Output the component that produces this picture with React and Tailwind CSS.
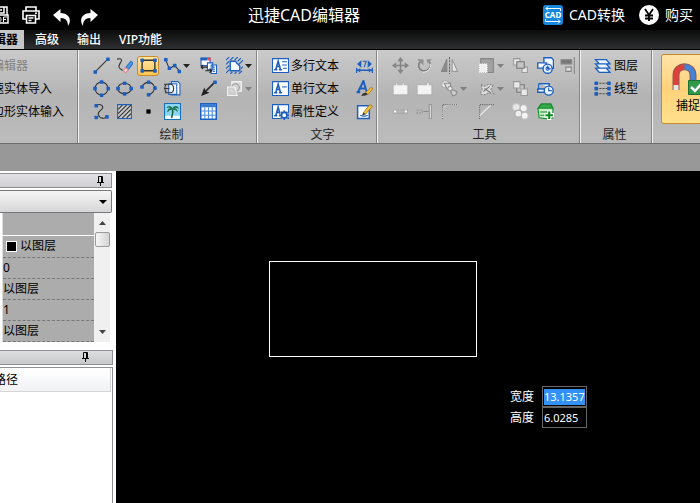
const BLUE = "#1d5fbf";
const GRAY = "#858585";

const Icon = ({ children }) => (
  <svg
    width="17"
    height="17"
    viewBox="0 0 16 16"
    fill="none"
    stroke="#333"
    strokeWidth="1"
    className="shrink-0"
    aria-hidden="true"
  >
    {children}
  </svg>
);

// small square handles used on most of the drawing icons
const Nodes = ({ at }) =>
  at.map(([x, y]) => (
    <rect key={`${x}-${y}`} x={x - 1.6} y={y - 1.6} width="3.4" height="3.4" rx=".6" fill={BLUE} />
  ));

const NodeGroup = ({ at }) => (
  <g stroke="none">
    <Nodes at={at} />
  </g>
);

const Caret = ({ light }) => (
  <svg width="7" height="4" viewBox="0 0 7 4" className="shrink-0" aria-hidden="true">
    <path d="M0 0h7L3.5 4z" fill={light ? "#808080" : "#222"} />
  </svg>
);

const PinIcon = () => (
  <svg width="9" height="10" viewBox="0 0 9 10" fill="none" stroke="#000" aria-hidden="true">
    <path d="M2.5 6V.5h4V6M5.5 1v5M1 6.5h7M4.5 7v3" />
  </svg>
);

const drawTools = [
  {
    name: "直线",
    icon: (
      <>
        <path d="M3 13L13 3" />
        <NodeGroup at={[[2, 14], [14, 2]]} />
      </>
    ),
  },
  {
    name: "草图",
    icon: (
      <>
        <path d="M1 2c3-1 5 0 4 2s-3 4-2 6 3 1 3 3" />
        <path d="M9.500 9.500L14 4l2 2-4.500 6z" fill="#4c9be8" stroke="#2a70c0" />
        <path d="M7 13l2-3 2.500 2L9 15z" fill="#f7e0e0" stroke="#d88" />
      </>
    ),
  },
  {
    name: "矩形",
    active: true,
    icon: (
      <>
        <path d="M2 3h12v10H2z" strokeWidth="1.3" />
        <NodeGroup at={[[2, 3], [14, 3], [2, 13], [14, 13]]} />
      </>
    ),
  },
  {
    name: "多段线",
    menu: true,
    icon: (
      <>
        <path d="M1.500 2.500L5 11l5-3 4.500 5" />
        <NodeGroup at={[[1.6, 2.5], [5, 10.5], [10, 8], [14.4, 13.5]]} />
      </>
    ),
  },
  {
    name: "插入块",
    icon: (
      <>
        <path d="M1 1h8.500v7H1z" fill="#fff" stroke={BLUE} />
        <path d="M.5 2h6.500" stroke={BLUE} strokeWidth="2.5" />
        <path d="M7 2h3" stroke="#e44" strokeWidth="2.5" />
        <path d="M7 5.500h5V12H7zM10.500 7.500h5v8h-5z" fill="#fff" stroke={BLUE} />
        <path d="M1 9.500h6M3 7.500l-2 2 2 2M5 13h6M9 11l2 2-2 2" stroke="#222" />
        <path d="M12 9.500h2M12 11.500h2M12 13.500h2" stroke={BLUE} />
      </>
    ),
  },
  {
    name: "边界",
    menu: true,
    icon: (
      <>
        <path d="M4 4h5c1 3 4 3 4 5v4H4z" fill="#f4f8ff" stroke={BLUE} strokeWidth="1.3" />
        <path
          d="M0 3l3-3M4 3l3-3M8 3l3-3M11 4l3-3M12 7l4-4M0 7l3-3M0 11l3-3M0 15l3-3M4 16l2-2M8 16l2-2M12 16l3-3M14 11l2-2"
          stroke={BLUE}
        />
      </>
    ),
  },
  {
    name: "圆",
    icon: (
      <>
        <circle cx="8" cy="8" r="6" />
        <NodeGroup at={[[8, 1.8], [8, 14.2], [1.8, 8], [14.2, 8]]} />
      </>
    ),
  },
  {
    name: "椭圆",
    icon: (
      <>
        <ellipse cx="8" cy="8" rx="6.3" ry="5" />
        <NodeGroup at={[[8, 3], [8, 13], [1.8, 8], [14.2, 8]]} />
      </>
    ),
  },
  {
    name: "圆弧",
    icon: (
      <>
        <path d="M2 6C5 1 11 1 13.500 6c1 4-2 7-6 8" />
        <NodeGroup at={[[1.8, 6.5], [8, 2], [14, 7.5], [8, 13.8]]} />
      </>
    ),
  },
  {
    name: "修订云线",
    icon: (
      <>
        <path d="M7 1.500h6l2 2V14H7z" fill="#fff" stroke={BLUE} />
        <path d="M4.500 3.500H12v10H4.500z" fill="#eef4fd" stroke={BLUE} />
        <path d="M0 4h6c4 0 4 8 0 8H1M2 4C0 7 1 10 2 12M0 8h5" />
      </>
    ),
  },
  {
    name: "引线",
    icon: (
      <>
        <path d="M14 2L5 11" strokeWidth="1.8" />
        <path d="M1 15l3-8 1.500 3.500L9 12z" fill="#222" stroke="none" />
        <NodeGroup at={[[14, 2]]} />
      </>
    ),
  },
  {
    name: "区域覆盖",
    menu: true,
    disabled: true,
    icon: (
      <>
        <path d="M5.500 1.500h9v9h-9z" fill="#d8d8d8" stroke="#f2f2f2" />
        <circle cx="9" cy="7" r="3.500" fill="#d2d2d2" stroke="#999" />
        <path d="M1.500 6.500h7l2 8h-9z" fill="#ddd" fillOpacity=".6" stroke="#f2f2f2" />
      </>
    ),
  },
  {
    name: "样条曲线",
    icon: (
      <>
        <path d="M3 3c2-3 7-1 6 2-1 2-5 3-4 6 1 4 6 4 8 2" />
        <NodeGroup at={[[3, 2.500], [3, 13.500], [13, 13]]} />
      </>
    ),
  },
  {
    name: "填充",
    icon: (
      <>
        <path d="M1.500 1.500h13v13h-13z" fill="#c9c9c9" stroke={BLUE} />
        <path d="M2 6l4-4M2 10l8-8M2 14L14 2M6 14l8-8M10 14l4-4" />
      </>
    ),
  },
  { name: "点", icon: <path d="M6 6h4v4H6z" fill="#000" stroke="none" /> },
  {
    name: "图像",
    icon: (
      <>
        <path d="M.5.5h15v15H.5z" fill="#8bd6f5" stroke="#1670bb" />
        <path d="M1 12h14v3H1z" fill="#f2faff" stroke="none" />
        <path d="M8 6c1 3 0 5-1 8" stroke="#165c36" strokeWidth="1.500" />
        <path
          d="M8 5C6 2 4 2 2 5c2-1 3-1 4 0-2 0-3 2-3 4 2-2 3-3 5-3 2 0 4 1 5 3 0-2-1-4-3-4 1-1 3 0 4 1 0-3-4-5-6-1z"
          fill="#147248"
          stroke="none"
        />
      </>
    ),
  },
  {
    name: "表格",
    icon: (
      <>
        <path d="M.7.7h14.600v14.600H.7z" fill="#fff" stroke={BLUE} strokeWidth="1.400" />
        <path d="M1 1h14v3H1z" fill="#397bd3" stroke="none" />
        <path d="M1 7.500h14M1 11.500h14M4.500 4v11M8 4v11M11.500 4v11" stroke="#4a8ae0" />
      </>
    ),
  },
];

// null leaves a cell of the grid empty
const editTools = [
  {
    name: "移动",
    icon: (
      <>
        <path d="M8 3v10M3 8h10" stroke={GRAY} strokeWidth="1.500" />
        <path d="M8 0l3 4H5zM8 16l3-4H5zM0 8l4-3v6zM16 8l-4-3v6z" fill={GRAY} stroke="none" />
      </>
    ),
  },
  {
    name: "旋转",
    icon: (
      <>
        <path d="M5 4C1 6 2 13 8 13c5 0 7-6 4-9" stroke="#7d7d7d" strokeWidth="1.500" />
        <path d="M6.500 14.500c5 0 8-4 7-8" stroke="#e4e4e4" />
        <path d="M1 2h6v6zM10 2h5l-4 4z" fill="#909090" stroke="none" />
      </>
    ),
  },
  {
    name: "镜像",
    icon: (
      <>
        <path d="M5.500 2v11.500h-5z" fill="#8d8d8d" stroke={GRAY} />
        <path d="M10.500 2v11.500h5z" fill="#e6e6e6" stroke="#999" />
        <path d="M8 0v16" stroke="#666" strokeDasharray="2 1" />
      </>
    ),
  },
  {
    name: "缩放",
    menu: true,
    icon: (
      <>
        <path d="M2.500 1.500h12v13h-12z" fill="#a2a2a2" stroke={GRAY} />
        <path d="M1.500 6.500h7v8h-7z" fill="#f0f0f0" stroke="#fff" strokeDasharray="1 1" />
      </>
    ),
  },
  {
    name: "前置",
    icon: (
      <>
        <path d="M1.500 1.500h6v6h-6zM9.500 9.500h5v5h-5z" fill="#e6e6e6" stroke="#999" />
        <path d="M4.500 4.500h7v6h-7z" fill="#c4c4c4" stroke="#777" />
      </>
    ),
  },
  {
    name: "复制对象",
    icon: (
      <>
        <path d="M6.500.7h7l2 2v8h-9z" fill="#f2f8ff" stroke={BLUE} strokeWidth="1.300" />
        <path d="M.7 5.500h8v5h-8z" fill="#f8fbff" stroke={BLUE} strokeWidth="1.300" />
        <circle cx="10" cy="11" r="4.300" fill="#e8f2ff" stroke={BLUE} strokeWidth="1.300" />
        <circle cx="10" cy="11" r="1.500" stroke={BLUE} />
        <path d="M10 8v3h3" stroke={BLUE} />
      </>
    ),
  },
  {
    name: "对齐",
    icon: (
      <>
        <path d="M1 2.500h10v4H1z" fill="#777" stroke={GRAY} />
        <path d="M5.500 9.500h5v4h-5z" fill="#ddd" stroke={GRAY} />
        <path d="M13.500 0v16" stroke={GRAY} />
      </>
    ),
  },
  {
    name: "合并",
    icon: <path d="M1 4.500h2.500v-2h2v2h4v-2h2v2H15v9.500H1z" fill="#f4f4f4" stroke="#b0b0b0" />,
  },
  {
    name: "分割",
    icon: <path d="M1 4.500h9v-2h2.500v2H15v9.500H1z" fill="#f4f4f4" stroke="#b0b0b0" />,
  },
  {
    name: "修剪",
    menu: true,
    icon: (
      <>
        <path d="M8 8l7 3-1 3-3 1z" fill="#ccc" stroke="#888" />
        <circle cx="4" cy="4" r="3.300" fill="#ececec" stroke="#aaa" />
        <path d="M3 3h6v6H6z" fill="#ddd" stroke="#888" />
        <circle cx="8.500" cy="8" r="2" fill="#eee" stroke="#999" />
      </>
    ),
  },
  {
    name: "阵列",
    menu: true,
    icon: (
      <>
        <path d="M3 4l3 2 4-2 4 1-2 4 3 4-5-1-4 2-4-1 2-4z" fill="#ddd" stroke="#888" strokeDasharray="2 1" />
        <path d="M6 8l6 4M5 11l6-5" stroke="#777" />
      </>
    ),
  },
  {
    name: "后置",
    icon: (
      <>
        <path d="M4.500 4.500h7v7h-7z" fill="#c4c4c4" stroke="#777" />
        <path d="M1.500 1.500h6v6h-6zM8.500 8.500h6v6h-6z" fill="#e9e9e9" stroke="#999" />
      </>
    ),
  },
  {
    name: "测量",
    icon: (
      <>
        <path d="M1.500 3.500h10v3M.7 8.500h7v3h-7z" fill="#f2f8ff" stroke={BLUE} strokeWidth="1.300" />
        <path d="M1.500 3.500v5" stroke={BLUE} />
        <circle cx="11" cy="10" r="4.200" fill="#eaf3ff" stroke={BLUE} strokeWidth="1.300" />
        <path d="M11 7v3h3" stroke={BLUE} />
      </>
    ),
  },
  null,
  {
    name: "打断",
    icon: (
      <>
        <path d="M1.500 6.500h3v3h-3zM11.500 6.500h3v3h-3z" fill="#fff" stroke="#aaa" />
        <path d="M6 6.500h5M6 9.500h5" stroke="#999" strokeDasharray="1 1" />
      </>
    ),
  },
  {
    name: "延伸",
    icon: (
      <>
        <path d="M1 6.500h5v3H1z" stroke="#999" strokeDasharray="2 1" />
        <path d="M7 8h5" stroke="#888" />
        <path d="M12.500 1.500h2v13h-2z" fill="#ddd" stroke="#999" />
      </>
    ),
  },
  {
    name: "圆角",
    icon: (
      <>
        <path d="M1.500 15V8c0-4 3-6.500 7-6.500h7" stroke="#ddd" />
        <path d="M1.500 15V1.500H15" stroke="#666" strokeDasharray="1 1" />
      </>
    ),
  },
  {
    name: "倒角",
    icon: (
      <>
        <path d="M1.500 12L12 2" stroke="#eee" />
        <path d="M1.500 15V1.500H15" stroke="#666" strokeDasharray="1 1" />
      </>
    ),
  },
  {
    name: "分解",
    icon: (
      <>
        <circle cx="4" cy="4" r="3.300" fill="#e8e8e8" stroke="#ccc" />
        <circle cx="11" cy="5" r="3.300" fill="#f2f2f2" stroke="#bbb" />
        <circle cx="6" cy="10" r="3.300" fill="#eee" stroke="#aaa" />
        <circle cx="12" cy="12" r="3.300" fill="#f4f4f4" stroke="#bbb" />
      </>
    ),
  },
  {
    name: "添加图层",
    icon: (
      <>
        <path d="M1 5l3-4h9l2 4v9l-4 1-9-1z" fill="#c8efc8" stroke="#178a2c" />
        <path d="M1 5l3-4h9l2 4z" fill="#36a84b" stroke="#178a2c" />
        <path d="M3 8.500h10M3 11.500h8" stroke="#178a2c" />
        <path d="M11.500 7v9M7 11.500h9" stroke="#fff" strokeWidth="4" />
        <path d="M11.500 8v7M8 11.500h7" stroke="#0b8a22" strokeWidth="2" />
      </>
    ),
  },
];

const LetterBox = ({ children }) => (
  <Icon>
    <path d="M.5 1.500h15v13H.5z" fill="#fff" stroke={BLUE} />
    <path d="M2 12h3M6.500 12h3M3.500 12l2.300-8L8 12M4.500 9h3.500" stroke={BLUE} strokeWidth="1.500" />
    {children}
  </Icon>
);

const textTools = [
  {
    label: "多行文本",
    icon: (
      <LetterBox>
        <path d="M9.500 4.500h4.500M9.500 7.500h4.500M10.500 10.500h3.500" stroke={BLUE} />
      </LetterBox>
    ),
  },
  {
    label: "单行文本",
    icon: (
      <LetterBox>
        <path d="M9.500 6.500h4.500" stroke={BLUE} />
      </LetterBox>
    ),
  },
  {
    label: "属性定义",
    icon: (
      <LetterBox>
        <circle cx="11.500" cy="11.500" r="4.500" fill="#bbb" stroke="none" />
        <circle cx="11.500" cy="11.500" r="2.500" fill="#fff" stroke={BLUE} strokeWidth="1.500" />
        <path
          d="M11.500 7v2M11.500 14v2M7 11.500h2M14 11.500h2M8.500 8.500l1 1M14.500 8.500l-1 1M8.500 14.500l1-1M14.500 14.500l-1-1"
          stroke={BLUE}
          strokeWidth="1.500"
        />
      </LetterBox>
    ),
  },
];

const textActions = [
  {
    name: "查找",
    icon: (
      <>
        <path d="M.5 10v5M15.500 10v5M1 12.500h14" stroke={BLUE} strokeWidth="1.300" />
        <path d="M5 3v7L1 6.500zM11 3v7l4-3.500zM1 12.500l3-2v4zM15 12.500l-3-2v4z" fill={BLUE} stroke="none" />
        <path d="M6.300 4h3.200L7.800 9.500" stroke={BLUE} />
      </>
    ),
  },
  {
    name: "文字样式",
    icon: (
      <>
        <path d="M2 11L7 1l3 10M4 8h5M.5 11.500h3.500" stroke={BLUE} strokeWidth="1.900" />
        <path d="M9 12l5-5 2 1-5 6z" fill="#f2c23b" stroke="#9a6b17" strokeWidth=".7" />
        <path d="M5 15c1-2 2-3 4-3l2 1c-1 2-3 2-6 2z" fill="#333" stroke="none" />
      </>
    ),
  },
  {
    name: "编辑文字",
    icon: (
      <>
        <path d="M1.500 2.500h11v12h-11z" fill="#fff" stroke={BLUE} strokeWidth="1.400" />
        <path d="M4 11.500c2 1 5 1 7 0" stroke={BLUE} />
        <path d="M7 9l6-7.500 2.500 1.500L9 10.500z" fill="#f2c23b" stroke="#9a6b17" strokeWidth=".7" />
        <path d="M5.500 12L7 9l2 1.500z" fill="#333" stroke="none" />
      </>
    ),
  },
];

const ToolButton = ({ tool, light }) => {
  if (!tool) return <span />;
  return (
    <button type="button" aria-label={tool.name} className="flex h-[23px] items-center">
      <span
        className={
          tool.active
            ? "flex h-5 w-[22px] items-center justify-center rounded-[3px] border border-[#c98a2b] bg-gradient-to-b from-[#ffe6a6] to-[#ffc64f]"
            : "flex h-5 w-[22px] items-center justify-center"
        }
      >
        <Icon>{tool.icon}</Icon>
      </span>
      {tool.menu && <Caret light={light || tool.disabled} />}
    </button>
  );
};

const Group = ({ title, className, children }) => (
  <section
    className={`flex shrink-0 flex-col border-r border-r-[#f0f0f0] pt-1 shadow-[inset_-1px_0_0_#858585] ${className}`}
  >
    <div className="h-[72px]">{children}</div>
    <h2 className="text-center leading-[17px] text-[#222]">{title}</h2>
  </section>
);

const TitleBar = () => (
  <header className="flex h-[30px] items-center bg-black whitespace-nowrap text-white">
    <div className="-ml-[9px] flex w-[257px] items-center gap-[13px]">
      <button type="button" aria-label="PDF">
        <svg width="18" height="18" viewBox="0 0 18 18" fill="none" stroke="#fff" strokeWidth="1.500">
          <path d="M2 9V1h14v8M5 1v6h8V1M10 3v2M1 9h16v8H1z" />
          <path d="M3 16v-5h2v2.500H3M7.500 11v5c2 0 2.500-1 2.500-2.500S9.500 11 7.500 11zM12.500 16v-5H16M12.500 13.500H15" strokeWidth="1" />
        </svg>
      </button>
      <button type="button" aria-label="打印">
        <svg width="18" height="18" viewBox="0 0 18 18" fill="none" stroke="#fff" strokeWidth="1.600">
          <path d="M4 5V1h10v4M4 13H1V5h16v8h-3M4.500 9.500h9V17h-9zM6.500 12h5M6.500 14.500h3M13 7.200h2" />
        </svg>
      </button>
      <div className="flex gap-[9px] pt-1">
        <button type="button" aria-label="撤销">
          <svg width="18" height="18" viewBox="0 0 18 18" fill="#fff">
            <path d="M0 7l7.500-6v4C14 5 20 10 15 18c0-5-2-8-7.500-8v4z" />
          </svg>
        </button>
        <button type="button" aria-label="重做">
          <svg width="18" height="18" viewBox="0 0 18 18" fill="#fff">
            <path d="M18 7l-7.500-6v4C4 5-2 10 3 18c0-5 2-8 7.500-8v4z" />
          </svg>
        </button>
      </div>
    </div>
    <h1 className="text-[16px]">迅捷CAD编辑器</h1>
    <div className="ml-auto flex items-center gap-[14px] pr-[7px] text-[14px]">
      <a href="#convert" className="flex items-center gap-[6px]">
        <span className="flex h-5 w-5 items-center justify-center rounded-[3px] bg-[#1687dd]">
          <svg width="20" height="20" viewBox="0 0 20 20" fill="none" stroke="#fff">
            <path d="M17.500 6V3.500H3M5 1.500l-2 2 2 2M2.500 14v2.500H17M15 14.500l2 2-2 2" />
            <text x="10" y="13" textAnchor="middle" fontSize="8" fontWeight="700" fill="#fff" stroke="none">
              CAD
            </text>
          </svg>
        </span>
        CAD转换
      </a>
      <a href="#buy" className="flex items-center gap-[6px]">
        <span className="flex h-5 w-5 items-center justify-center rounded-full bg-white">
          <svg width="14" height="14" viewBox="0 0 14 14" fill="none" stroke="#000" strokeWidth="1.800">
            <path d="M3 1l4 6 4-6M7 7v6M3 7.500h8M3 10.500h8" />
          </svg>
        </span>
        购买
      </a>
    </div>
  </header>
);

const TabBar = () => (
  <nav className="flex h-5 items-stretch border-b border-black bg-gradient-to-b from-[#0c0c0c] to-[#2e2f31] font-medium text-white">
    <button
      type="button"
      className="-ml-[6px] w-[30px] shrink-0 bg-[#c6c6c6] text-left leading-5 font-bold whitespace-nowrap text-black"
    >
      辑器
    </button>
    <div className="flex gap-[18px] pl-[11px] leading-5">
      <button type="button">高级</button>
      <button type="button">输出</button>
      <button type="button">VIP功能</button>
    </div>
  </nav>
);

const Ribbon = () => (
  <div className="flex h-[94px] shrink-0 overflow-hidden border-b border-[#6c6c6c] bg-gradient-to-b from-[#cacaca] via-[#b4b4b4] to-[#bcbcbc] whitespace-nowrap text-black">
    <Group className="w-[79px]">
      <div className="-ml-2 flex flex-col items-start leading-[23px]">
        <button type="button" disabled className="text-[#828282]">
          编辑器
        </button>
        <button type="button">速实体导入</button>
        <button type="button">边形实体输入</button>
      </div>
    </Group>
    <Group title="绘制" className="w-[179px] pr-1 pl-[11px]">
      <div className="grid grid-cols-[23px_24px_24px_36px_26px_30px]">
        {drawTools.map((tool) => (
          <ToolButton key={tool.name} tool={tool} />
        ))}
      </div>
    </Group>
    <Group title="文字" className="w-[120px] pr-1 pl-[14px]">
      <div className="grid grid-cols-[84px_18px]">
        {textTools.map((tool, i) => (
          <div key={tool.label} className="contents">
            <button type="button" className="flex h-[23px] items-center gap-[2px]">
              {tool.icon}
              {tool.label}
            </button>
            <button type="button" aria-label={textActions[i].name} className="flex items-center">
              <Icon>{textActions[i].icon}</Icon>
            </button>
          </div>
        ))}
      </div>
    </Group>
    <Group title="工具" className="w-[203px] pl-[11px]">
      <div className="grid grid-cols-[24px_25px_37px_34px_25px_23px_22px]">
        {editTools.map((tool, i) => (
          <ToolButton key={i} tool={tool} light />
        ))}
      </div>
    </Group>
    <Group title="属性" className="w-[72px] pr-1">
      <div className="flex flex-col pl-[13px]">
        <button type="button" className="flex h-[23px] items-center gap-[3px]">
          <Icon>
            <path
              d="M1.500 10.500h10l3.500 4H5zM1.500 6.500h10l3.500 4H5zM1.500 2.500h10l3.500 4H5z"
              fill="#eef5ff"
              stroke={BLUE}
              strokeWidth="1.300"
            />
          </Icon>
          图层
        </button>
        <button type="button" className="flex h-[23px] items-center gap-[3px]">
          <Icon>
            <path d="M2 3h12M2 8h12M2 13h12" strokeDasharray="2 1" stroke="#444" />
            <NodeGroup at={[[2, 3], [14, 3], [2, 8], [14, 8], [2, 13], [14, 13]]} />
          </Icon>
          线型
        </button>
      </div>
    </Group>
    <div className="min-w-0 flex-1 overflow-hidden pt-1 pl-2">
      <button
        type="button"
        className="flex h-[70px] w-[54px] flex-col items-center rounded-[3px] border border-[#c98a2b] bg-gradient-to-b from-[#ffe3a8] via-[#ffd27a] to-[#ffe08c] pt-2"
      >
        <svg width="32" height="32" viewBox="0 0 32 32" fill="none">
          <path d="M4 27V12C4 1 21 1 21 12v15" stroke="#8b5a5a" strokeWidth="7" />
          <path d="M4 22V12C4 7 7 4 12.500 4" stroke="#e0403a" strokeWidth="5" />
          <path d="M12.500 4c6 0 8.500 4 8.500 8v9" stroke="#4682d6" strokeWidth="5" />
          <path d="M4 22v5M21 22v5" stroke="#e4e4e4" strokeWidth="5" />
          <path d="M16.500 17.500h15v14h-15z" fill="#31984a" stroke="#1d7034" />
          <path d="M19 24l4 4 7-8" stroke="#fff" strokeWidth="2.500" />
        </svg>
        <span className="leading-[22px]">捕捉</span>
      </button>
    </div>
  </div>
);

const properties = ["0", "以图层", "1", "以图层"];

const PropertyPanel = () => (
  <section className="pt-[2px] pr-1 pb-2">
    <div className="flex h-[15px] items-center justify-end border border-l-0 border-[#8e8f94] bg-gradient-to-b from-[#e2e2e6] to-[#cfcfd4] pr-[6px]">
      <button type="button" aria-label="固定属性面板">
        <PinIcon />
      </button>
    </div>
    <div className="relative mt-[2px]">
      <select
        aria-label="对象"
        className="block h-[23px] w-full appearance-none rounded-r-[2px] border border-l-0 border-[#777] bg-gradient-to-b from-[#f6f6f6] to-[#d6d6d8]"
      >
        <option></option>
      </select>
      <span className="pointer-events-none absolute top-[10px] right-[5px]">
        <svg width="8" height="4" viewBox="0 0 8 4" className="block">
          <path d="M0 0h8L4 4z" />
        </svg>
      </span>
    </div>
    <div className="flex px-[2px]">
      <table className="flex-1 border-collapse border-l border-l-[#ddd] bg-[#acacac] text-left">
        <tbody>
          <tr className="h-[22px] border-b border-b-white">
            <td></td>
          </tr>
          <tr className="h-[22px] border-b border-dashed border-b-[#777]">
            <td className="py-0 pl-[3px] leading-5">
              <span className="flex items-center gap-[3px]">
                <span className="h-[11px] w-[11px] border border-white bg-black" />
                以图层
              </span>
            </td>
          </tr>
          {properties.map((value, i) => (
            <tr key={i} className="h-[21px] border-b border-dashed border-b-[#777]">
              <td className="p-0 leading-5">{value}</td>
            </tr>
          ))}
        </tbody>
      </table>
      <div className="flex w-4 flex-col items-center bg-[#f0f0f0] py-2">
        <svg width="7" height="4" viewBox="0 0 7 4">
          <path d="M0 4h7L3.500 0z" fill="#444" />
        </svg>
        <div className="mt-[7px] h-[15px] w-[15px] rounded-[2px] border border-[#999] bg-gradient-to-r from-[#f6f6f6] to-[#d4d4d4]" />
        <svg width="7" height="4" viewBox="0 0 7 4" className="mt-auto">
          <path d="M0 0h7L3.500 4z" fill="#444" />
        </svg>
      </div>
    </div>
  </section>
);

const PathPanel = () => (
  <section className="flex flex-1 flex-col pr-[3px]">
    <div className="flex h-[15px] items-center justify-end border border-l-0 border-[#8e8f94] bg-gradient-to-b from-[#dedfe1] to-[#c6c7c9] pr-[22px]">
      <button type="button" aria-label="固定路径面板">
        <PinIcon />
      </button>
    </div>
    <div className="mt-[2px] flex-1 border-t border-r border-[#8e8f94] pr-px">
      <div className="h-6 border-r border-b border-[#d5d5d5] bg-gradient-to-b from-white to-[#f1f2f4]">
        <span className="-ml-[6px] block leading-6">路径</span>
      </div>
    </div>
  </section>
);

const Canvas = () => (
  <main className="relative min-w-0 flex-1 overflow-hidden bg-black text-white">
    <div className="absolute top-[90px] left-[153px] h-24 w-52 border border-white" />
    <div className="absolute top-[215px] left-[394px] grid grid-cols-[32px_45px]">
      <label htmlFor="rect-width" className="leading-[21px]">
        宽度
      </label>
      <span className="flex h-[21px] items-center border border-[#666] px-px">
        <input
          id="rect-width"
          defaultValue="13.1357"
          className="h-4 w-[41px] bg-[#3390f5] p-0 text-[11px] outline-none"
        />
      </span>
      <label htmlFor="rect-height" className="leading-[21px]">
        高度
      </label>
      <span className="flex h-[21px] items-center border border-[#666] px-px">
        <input
          id="rect-height"
          defaultValue="6.0285"
          className="h-4 w-[41px] bg-black p-0 text-[11px] outline-none"
        />
      </span>
    </div>
  </main>
);

const App = () => {
  return (
    <div className="flex min-h-screen flex-col overflow-hidden bg-white font-['Noto_Sans','Noto_Sans_CJK_SC',sans-serif] text-[12px] leading-none">
      <TitleBar />
      <TabBar />
      <Ribbon />
      <div className="h-[27px] shrink-0 bg-[#989898]" />
      <div className="flex flex-1">
        <aside className="flex w-[116px] shrink-0 flex-col bg-white text-black">
          <PropertyPanel />
          <PathPanel />
        </aside>
        <Canvas />
      </div>
    </div>
  );
};

export default App;
